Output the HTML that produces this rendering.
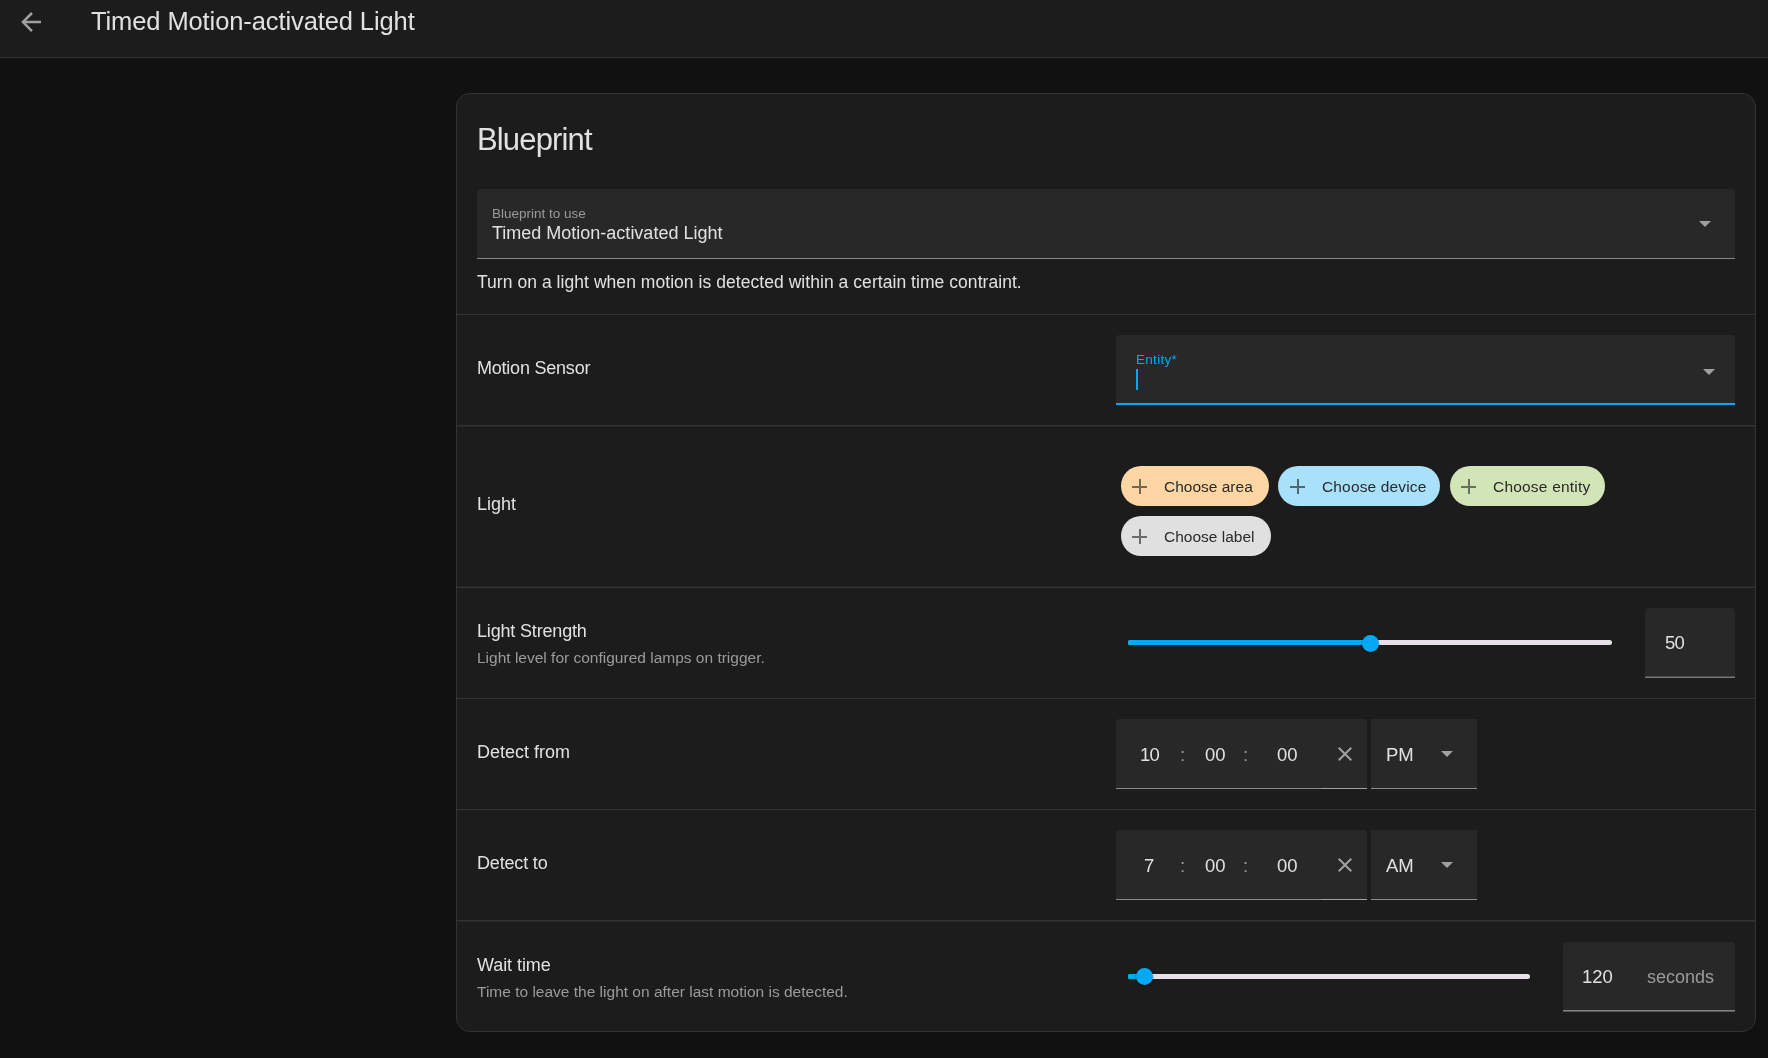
<!DOCTYPE html>
<html>
<head>
<meta charset="utf-8">
<style>
html,body{margin:0;padding:0;}
body{width:1768px;height:1058px;will-change:transform;background:#111111;position:relative;overflow:hidden;font-family:"Liberation Sans",sans-serif;color:#e1e1e1;}
.a{position:absolute;}
.t{position:absolute;white-space:nowrap;line-height:1;}
#hdr{left:0;top:0;width:1768px;height:57px;background:#1c1c1c;border-bottom:1px solid #333333;}
#card{left:456px;top:93px;width:1298px;height:937px;background:#1c1c1c;border:1px solid #333333;border-radius:14px;}
.div{position:absolute;left:457px;width:1298px;height:1px;background:#333333;}
.dim{position:absolute;left:457px;width:1298px;height:1px;background:#272727;}
.fld{position:absolute;background:#282828;border-radius:4px 4px 0 0;}
.line{position:absolute;height:1px;background:#8a8a8a;}
.lbl{font-size:18px;color:#e1e1e1;}
.desc{font-size:15.5px;color:#9b9b9b;}
.chip{position:absolute;height:40px;border-radius:20px;}
.chip .t{font-size:15.5px;color:#2a2a2a;}
.plus{position:absolute;width:15px;height:15px;}
.plus:before{content:"";position:absolute;left:0;top:6.5px;width:15px;height:2px;background:currentColor;}
.plus:after{content:"";position:absolute;left:6.5px;top:0;width:2px;height:15px;background:currentColor;}
.tri{position:absolute;width:0;height:0;border-left:6px solid transparent;border-right:6px solid transparent;border-top:6px solid #a0a0a0;}
.track{position:absolute;height:5px;border-radius:2.5px;}
.thumb{position:absolute;width:17px;height:17px;border-radius:50%;background:#03a9f4;box-shadow:0 1px 2px rgba(0,0,0,0.5);}
</style>
</head>
<body>
<!-- header -->
<div id="hdr" class="a"></div>
<svg class="a" style="left:16px;top:7px" width="30" height="30" viewBox="0 0 24 24"><path fill="#a0a0a0" d="M20,11V13H8L13.5,18.5L12.08,19.92L4.16,12L12.08,4.08L13.5,5.5L8,11H20Z"/></svg>
<div class="t" style="left:91px;top:9px;font-size:25.5px;letter-spacing:-0.1px;color:#e1e1e1">Timed Motion-activated Light</div>

<!-- card -->
<div id="card" class="a"></div>
<div class="t" style="left:477px;top:124.3px;font-size:31px;letter-spacing:-0.85px;color:#e1e1e1">Blueprint</div>

<div class="fld" style="left:477px;top:189px;width:1258px;height:69px;"></div>
<div class="line" style="left:477px;top:258px;width:1258px;background:#868686"></div>
<div class="t" style="left:492px;top:207.3px;font-size:13.5px;color:#9b9b9b">Blueprint to use</div>
<div class="t" style="left:492px;top:224.3px;font-size:18px;color:#e1e1e1">Timed Motion-activated Light</div>
<div class="tri" style="left:1699px;top:221px"></div>

<div class="t" style="left:477px;top:273.8px;font-size:17.5px;letter-spacing:0.05px">Turn on a light when motion is detected within a certain time contraint.</div>

<div class="div" style="top:314px"></div>

<!-- Motion sensor -->
<div class="t lbl" style="left:477px;top:358.6px;letter-spacing:-0.22px">Motion Sensor</div>
<div class="fld" style="left:1116px;top:335px;width:619px;height:68px;"></div>
<div class="a" style="left:1116px;top:403px;width:619px;height:2px;background:#03a9f4"></div>
<div class="t" style="left:1136px;top:353.4px;font-size:13.5px;letter-spacing:0.3px;color:#03a9f4">Entity*</div>
<div class="a" style="left:1136px;top:369px;width:2px;height:21px;background:#03a9f4"></div>
<div class="tri" style="left:1703px;top:369px"></div>

<div class="div" style="top:425px"></div><div class="dim" style="top:426px"></div>

<!-- Light -->
<div class="t lbl" style="left:477px;top:495.3px;">Light</div>
<div class="chip" style="left:1121px;top:466px;width:148px;background:#fdd6a4;color:#776650">
  <div class="plus" style="left:11px;top:13px"></div>
  <div class="t" style="left:43px;top:12.6px">Choose area</div>
</div>
<div class="chip" style="left:1278px;top:466px;width:162px;background:#a9e0fa;color:#4f686f">
  <div class="plus" style="left:12px;top:13px"></div>
  <div class="t" style="left:44px;top:12.6px;letter-spacing:0.15px">Choose device</div>
</div>
<div class="chip" style="left:1450px;top:466px;width:155px;background:#d2e5b6;color:#66705a">
  <div class="plus" style="left:11px;top:13px"></div>
  <div class="t" style="left:43px;top:12.6px;letter-spacing:0.2px">Choose entity</div>
</div>
<div class="chip" style="left:1121px;top:516px;width:150px;background:#e0e0e0;color:#6a6a6a">
  <div class="plus" style="left:11px;top:13px"></div>
  <div class="t" style="left:43px;top:12.6px">Choose label</div>
</div>

<div class="dim" style="top:586px"></div><div class="div" style="top:587px"></div>

<!-- Light Strength -->
<div class="t lbl" style="left:477px;top:621.8px;letter-spacing:-0.17px">Light Strength</div>
<div class="t desc" style="left:477px;top:649.9px;">Light level for configured lamps on trigger.</div>
<div class="track" style="left:1128px;top:640px;width:484px;background:#e6e1e6"></div>
<div class="track" style="left:1128px;top:640px;width:243px;background:#03a9f4"></div>
<div class="thumb" style="left:1361.8px;top:634.8px"></div>
<div class="fld" style="left:1645px;top:608px;width:90px;height:69px;"></div>
<div class="line" style="left:1645px;top:676px;width:90px;background:#4a4a4a"></div><div class="line" style="left:1645px;top:677px;width:90px;background:#7a7a7a"></div>
<div class="t" style="left:1665px;top:634.1px;font-size:18.5px;letter-spacing:-0.9px">50</div>

<div class="div" style="top:698px"></div>

<!-- Detect from -->
<div class="t lbl" style="left:477px;top:742.5px;">Detect from</div>
<div class="fld" style="left:1116px;top:719px;width:251px;height:69px;"></div>
<div class="line" style="left:1116px;top:788px;width:206px;"></div>
<div class="line" style="left:1322px;top:788px;width:45px;background:#a0a0a0"></div>
<div class="fld" style="left:1371px;top:719px;width:106px;height:69px;border-radius:0"></div>
<div class="line" style="left:1371px;top:788px;width:106px;"></div>
<div class="t" style="left:1140px;top:745.9px;font-size:18.5px;letter-spacing:-0.8px">10</div>
<div class="t" style="left:1180px;top:745.9px;font-size:18.5px;color:#9b9b9b">:</div>
<div class="t" style="left:1205px;top:745.9px;font-size:18.5px;">00</div>
<div class="t" style="left:1243px;top:745.9px;font-size:18.5px;color:#9b9b9b">:</div>
<div class="t" style="left:1277px;top:745.9px;font-size:18.5px;">00</div>
<svg class="a" style="left:1333px;top:741.5px" width="24" height="24" viewBox="0 0 24 24"><path fill="#a0a0a0" d="M19,6.41L17.59,5L12,10.59L6.41,5L5,6.41L10.59,12L5,17.59L6.41,19L12,13.41L17.59,19L19,17.59L13.41,12L19,6.41Z"/></svg>
<div class="t" style="left:1386px;top:745.9px;font-size:18.5px;letter-spacing:0px">PM</div>
<div class="tri" style="left:1441px;top:751px"></div>

<div class="div" style="top:809px"></div>

<!-- Detect to -->
<div class="t lbl" style="left:477px;top:853.5px;letter-spacing:-0.17px">Detect to</div>
<div class="fld" style="left:1116px;top:830px;width:251px;height:69px;"></div>
<div class="line" style="left:1116px;top:899px;width:206px;"></div>
<div class="line" style="left:1322px;top:899px;width:45px;background:#a0a0a0"></div>
<div class="fld" style="left:1371px;top:830px;width:106px;height:69px;border-radius:0"></div>
<div class="line" style="left:1371px;top:899px;width:106px;"></div>
<div class="t" style="left:1144px;top:856.9px;font-size:18.5px;">7</div>
<div class="t" style="left:1180px;top:856.9px;font-size:18.5px;color:#9b9b9b">:</div>
<div class="t" style="left:1205px;top:856.9px;font-size:18.5px;">00</div>
<div class="t" style="left:1243px;top:856.9px;font-size:18.5px;color:#9b9b9b">:</div>
<div class="t" style="left:1277px;top:856.9px;font-size:18.5px;">00</div>
<svg class="a" style="left:1333px;top:852.5px" width="24" height="24" viewBox="0 0 24 24"><path fill="#a0a0a0" d="M19,6.41L17.59,5L12,10.59L6.41,5L5,6.41L10.59,12L5,17.59L6.41,19L12,13.41L17.59,19L19,17.59L13.41,12L19,6.41Z"/></svg>
<div class="t" style="left:1386px;top:856.9px;font-size:18.5px;letter-spacing:0px">AM</div>
<div class="tri" style="left:1441px;top:862px"></div>

<div class="div" style="top:920px"></div><div class="dim" style="top:921px"></div>

<!-- Wait time -->
<div class="t lbl" style="left:477px;top:956.4px;letter-spacing:-0.07px">Wait time</div>
<div class="t desc" style="left:477px;top:984.1px;">Time to leave the light on after last motion is detected.</div>
<div class="track" style="left:1128px;top:974px;width:402px;background:#e6e1e6"></div>
<div class="track" style="left:1128px;top:974px;width:16px;background:#03a9f4"></div>
<div class="thumb" style="left:1135.8px;top:968px"></div>
<div class="fld" style="left:1563px;top:942px;width:172px;height:68px;"></div>
<div class="line" style="left:1563px;top:1010px;width:172px;background:#808080"></div><div class="line" style="left:1563px;top:1011px;width:172px;background:#585858"></div>
<div class="t" style="left:1582px;top:968px;font-size:18.5px;">120</div>
<div class="t" style="left:1647px;top:968.4px;font-size:18px;color:#9b9b9b">seconds</div>
</body>
</html>
